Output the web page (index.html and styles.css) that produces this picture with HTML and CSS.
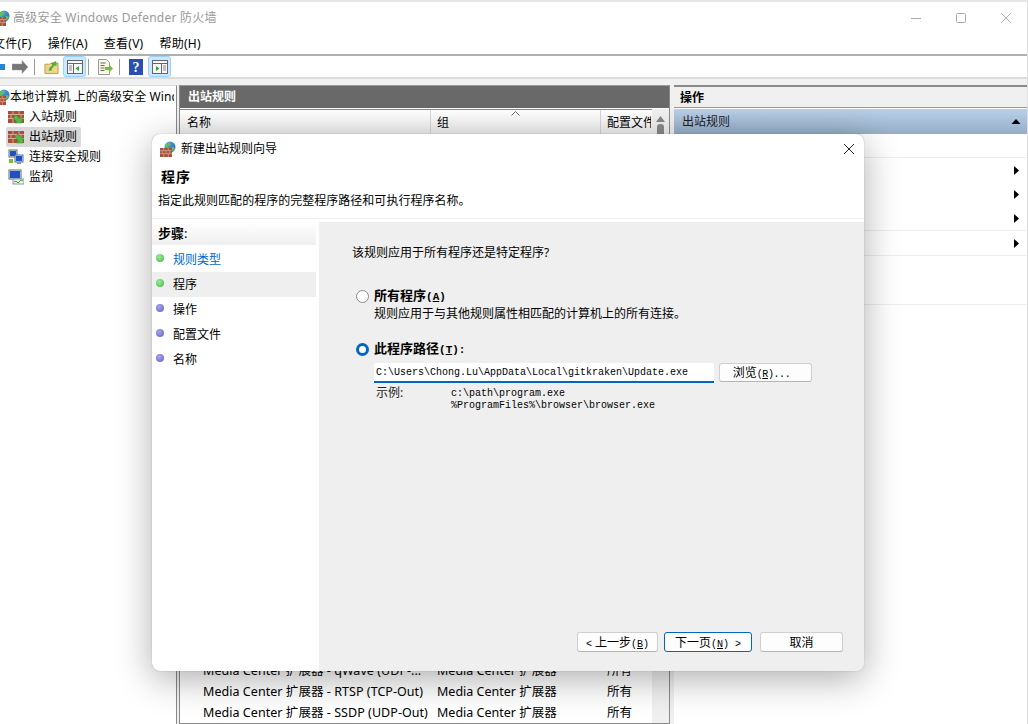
FILE: index.html
```html
<!DOCTYPE html>
<html lang="zh-CN">
<head>
<meta charset="utf-8">
<title>高级安全 Windows Defender 防火墙</title>
<link rel="stylesheet" href="styles.css">
</head>
<body>
<svg class="defs" width="0" height="0" aria-hidden="true">
  <defs>
    <linearGradient id="globe" x1="0" y1="0" x2="1" y2="1"><stop offset="0" stop-color="#5ab4f0"/><stop offset="1" stop-color="#1c5fb0"/></linearGradient>
    <symbol id="wall" viewBox="0 0 16 12">
      <rect width="16" height="12" fill="#a4503a"/>
      <path d="M0 3.500h16M0 7.500h16M5 0v3.500M11 0v3.500M3 3.500v4M8 3.500v4M13 3.500v4M5 7.500V12M11 7.500V12" stroke="#d8a890" stroke-width="1" fill="none"/>
    </symbol>
    <symbol id="fw" viewBox="0 0 16 16">
      <circle cx="10" cy="6" r="5.500" fill="url(#globe)"/>
      <path d="M8 1.500c2 0 3 1 2.500 2.500S8 5 7.500 6.500 6 6 5.500 5 6 2 8 1.500zM12 6c1.500 0 2.500.5 3 1-.5 2-2 3-3 3s-1.500-3 0-4z" fill="#5fbf5a"/>
      <use href="#wall" x="0" y="7" width="12" height="9"/>
    </symbol>
    <symbol id="screens" viewBox="0 0 16 16">
      <rect x="1" y="1" width="8" height="7" fill="#e8eef8" stroke="#5a6a80"/>
      <rect x="2" y="2" width="6" height="5" fill="#1e50c8"/>
      <rect x="7" y="6" width="8" height="7" fill="#e8eef8" stroke="#5a6a80"/>
      <rect x="8" y="7" width="6" height="5" fill="#1e50c8"/>
      <rect x="9" y="13" width="4" height="2" fill="#8a96a6"/>
      <path d="M1 10h4v4H1z" fill="#6fbf3c"/>
    </symbol>
  </defs>
</svg>

<div class="app">
  <div class="desktop-strip"></div>
  <header class="titlebar">
    <svg class="title-icon"><use href="#fw"/></svg>
    <span class="title-text">高级安全 Windows Defender 防火墙</span>
    <div class="caption">
      <svg class="cap" viewBox="0 0 10 10"><path d="M0 5.500h10" stroke="#aaa" fill="none"/></svg>
      <svg class="cap" viewBox="0 0 10 10"><rect x=".5" y=".5" width="9" height="9" rx="1" stroke="#aaa" fill="none"/></svg>
      <svg class="cap" viewBox="0 0 10 10"><path d="M0 0l10 10M10 0L0 10" stroke="#b4b4b4" fill="none"/></svg>
    </div>
  </header>

  <nav class="menubar">
    <span>文件(F)</span><span>操作(A)</span><span>查看(V)</span><span>帮助(H)</span>
  </nav>

  <div class="toolbar">
    <svg class="tb-back" viewBox="0 0 16 14"><path d="M0 7l6-6v3h10v6H6v3z" fill="#1e88d8"/></svg>
    <svg class="tb-fwd" viewBox="0 0 16 14"><path d="M16 7l-6-6.500V4H0v6h10v3.500z" fill="#777" stroke="#999" stroke-width=".5"/></svg>
    <i class="tb-sep s1"></i>
    <svg class="tb-ico folder" viewBox="0 0 16 16"><path d="M1 5h5l1-1h8v11H1z" fill="#f0d48a" stroke="#b99a4a"/><path d="M5 12c0-3 2-5 4-6L7.500 4 13 1.500 13.500 7 11.500 6.500C9.500 8 8 10 8 12z" fill="#4fae3c"/></svg>
    <span class="tb-toggle t1"><svg viewBox="0 0 16 14"><rect x=".5" y=".5" width="15" height="13" fill="#f7f7f7" stroke="#666"/><path d="M1 3.500h14M6.500 4v9" stroke="#666" fill="none"/><path d="M2 6h3M2 8h3M2 10h3" stroke="#888" fill="none"/><path d="M12 6v5L8.500 8.500z" fill="#2fa83a"/></svg></span>
    <i class="tb-sep s2"></i>
    <svg class="tb-ico doc" viewBox="0 0 16 16"><path d="M1.500.5h8l3 3v12h-11z" fill="#fbf7e8" stroke="#999"/><path d="M3.500 4h5M3.500 6.500h4M3.500 9h4M3.500 11.500h4" stroke="#666" fill="none"/><path d="M8 8h4V5.500L16 9.500 12 13.500V11H8z" fill="#6fbf3c"/></svg>
    <i class="tb-sep s3"></i>
    <svg class="tb-ico help" viewBox="0 0 14 16"><rect width="14" height="16" fill="#2a4fb0"/><text x="7" y="13" text-anchor="middle" class="help-q">?</text></svg>
    <span class="tb-toggle t2"><svg viewBox="0 0 16 14"><rect x=".5" y=".5" width="15" height="13" fill="#f7f7f7" stroke="#666"/><path d="M1 3.500h14M9.500 4v9" stroke="#666" fill="none"/><path d="M11 6h3M11 8h3M11 10h3" stroke="#888" fill="none"/><path d="M4 6v5L7.500 8.500z" fill="#2fa83a"/></svg></span>
  </div>

  <main class="panes">
    <aside class="tree">
      <div class="tree-row root"><svg class="root-ico"><use href="#fw"/></svg><span class="root-label">本地计算机 上的高级安全 Windows Defender 防火墙</span></div>
      <div class="tree-row"><svg class="tree-ico" viewBox="0 0 16 14"><use href="#wall" width="16" height="12" y="1"/><path d="M14 13V7l-2 2-4-4-3 3 4 4-2 1z" fill="#52b848" stroke="#3a8a34" stroke-width=".5"/></svg><span>入站规则</span></div>
      <div class="tree-row selected"><svg class="tree-ico" viewBox="0 0 16 14"><use href="#wall" width="16" height="12" y="1"/><path d="M15 13H8.500l2-2L7 7l3-3 3.500 4 1.500-2z" fill="#52b848" stroke="#3a8a34" stroke-width=".5"/></svg><span>出站规则</span></div>
      <div class="tree-row"><svg class="tree-ico"><use href="#screens"/></svg><span>连接安全规则</span></div>
      <div class="tree-row"><svg class="tree-ico" viewBox="0 0 16 16"><rect x="1" y="1" width="12" height="9" fill="#e8eef8" stroke="#5a6a80"/><rect x="2" y="2" width="10" height="7" fill="#1e50c8"/><rect x="5" y="10" width="11" height="5" fill="#eef3ee" stroke="#8a96a6"/><path d="M6 13l2-1 2 2 3-3 2 1" stroke="#3aa63a" fill="none"/></svg><span>监视</span></div>
    </aside>

    <section class="center">
      <h2 class="center-head">出站规则</h2>
      <div class="table-head">
        <span class="col-name">名称</span>
        <span class="col-group">组<svg class="sort" viewBox="0 0 9 5"><path d="M.5 4.500l4-4 4 4" stroke="#666" fill="none"/></svg></span>
        <span class="col-prof">配置文件</span>
      </div>
      <div class="table-wrap">
        <div class="rows">
          <div class="row"><span class="col-name">Media Center 扩展器 - qWave (UDP-...</span><span class="col-group">Media Center 扩展器</span><span class="col-prof">所有</span></div>
          <div class="row"><span class="col-name">Media Center 扩展器 - RTSP (TCP-Out)</span><span class="col-group">Media Center 扩展器</span><span class="col-prof">所有</span></div>
          <div class="row"><span class="col-name">Media Center 扩展器 - SSDP (UDP-Out)</span><span class="col-group">Media Center 扩展器</span><span class="col-prof">所有</span></div>
        </div>
        <div class="scrollbar">
          <svg class="sb-up" viewBox="0 0 9 6"><path d="M0 6l4.500-6L9 6z" fill="#888"/></svg>
          <i class="sb-thumb"></i>
        </div>
      </div>
    </section>

    <aside class="actions">
      <h2 class="actions-head">操作</h2>
      <div class="actions-bar"><span>出站规则</span><svg class="up" viewBox="0 0 9 5"><path d="M0 5l4.500-5L9 5z" fill="#000"/></svg></div>
      <ul class="action-list">
        <li class="a1"></li>
        <li class="a2 nosep"><svg class="more" viewBox="0 0 5 9"><path d="M0 0l5 4.500L0 9z"/></svg></li>
        <li class="a2 nosep"><svg class="more" viewBox="0 0 5 9"><path d="M0 0l5 4.500L0 9z"/></svg></li>
        <li class="a3"><svg class="more" viewBox="0 0 5 9"><path d="M0 0l5 4.500L0 9z"/></svg></li>
        <li class="a4"><svg class="more" viewBox="0 0 5 9"><path d="M0 0l5 4.500L0 9z"/></svg></li>
        <li class="a5"></li>
      </ul>
    </aside>
  </main>
</div>

<div class="dialog" role="dialog">
  <div class="dlg-title">
    <svg class="dlg-ico"><use href="#fw"/></svg>
    <span>新建出站规则向导</span>
    <svg class="dlg-close" viewBox="0 0 10 10"><path d="M0 0l10 10M10 0L0 10" stroke="#222" fill="none"/></svg>
  </div>
  <div class="dlg-head">
    <h1>程序</h1>
    <p>指定此规则匹配的程序的完整程序路径和可执行程序名称。</p>
  </div>
  <div class="dlg-body">
    <div class="steps">
      <div class="steps-head"><b>步骤</b>:</div>
      <div class="step"><i class="dot done"></i><a class="step-link">规则类型</a></div>
      <div class="step current"><i class="dot done"></i>程序</div>
      <div class="step"><i class="dot"></i>操作</div>
      <div class="step"><i class="dot"></i>配置文件</div>
      <div class="step"><i class="dot"></i>名称</div>
    </div>
    <div class="content">
      <p class="question">该规则应用于所有程序还是特定程序?</p>
      <div class="option first">
        <i class="radio"></i>
        <div>
          <div class="opt-label">所有程序<span class="mono">(<u>A</u>)</span></div>
          <div class="opt-sub">规则应用于与其他规则属性相匹配的计算机上的所有连接。</div>
        </div>
      </div>
      <div class="option second">
        <i class="radio on"></i>
        <div class="opt-label">此程序路径<span class="mono">(<u>T</u>):</span></div>
      </div>
      <div class="path-row">
        <div class="path-input">C:\Users\Chong.Lu\AppData\Local\gitkraken\Update.exe</div>
        <button class="btn browse">浏览<span class="mono">(<u>R</u>)...</span></button>
      </div>
      <div class="example">
        <span class="ex-label">示例:</span>
        <span class="ex-text">c:\path\program.exe<br>%ProgramFiles%\browser\browser.exe</span>
      </div>
      <div class="dlg-foot">
        <button class="btn back"><span class="mono">&lt;</span> 上一步<span class="mono">(<u>B</u>)</span></button>
        <button class="btn next">下一页<span class="mono">(<u>N</u>) &gt;</span></button>
        <button class="btn cancel">取消</button>
      </div>
    </div>
  </div>
</div>
</body>
</html>
```
FILE: styles.css
```css
* { box-sizing: border-box; }
html, body { margin: 0; height: 100%; }
body {
  width: 1028px; height: 724px; overflow: hidden; position: relative;
  background: #fff; color: #000;
  font: 12px/16px "Noto Sans", "Noto Sans CJK SC", sans-serif;
}
.defs { position: absolute; }
.app { height: 724px; display: flex; flex-direction: column; border-right: 1px solid #dedede; }
.desktop-strip { height: 2px; background: #e6e6e6; margin-right: -1px; flex: none; }

.titlebar { height: 32px; flex: none; display: flex; align-items: center; background: #fff; position: relative; border-top-right-radius: 8px; }
.title-icon { width: 16px; height: 16px; margin: 0 3px 0 -6px; flex: none; }
.title-text { color: #9a9a9a; letter-spacing: .25px; }
.caption { margin-left: auto; display: flex; gap: 35px; padding-right: 16px; }
.cap { width: 10px; height: 10px; }

.menubar { height: 22px; flex: none; display: flex; gap: 16px; margin-left: -7px; border-bottom: 2px solid #b0b0b0; line-height: 20px; letter-spacing: .25px; }

.toolbar { height: 23px; flex: none; display: flex; align-items: center; border-bottom: 2px solid #dcdcdc; background: #fff; }
.tb-back { width: 16px; height: 14px; margin-left: -11px; }
.tb-fwd { width: 16px; height: 14px; margin-left: 7px; }
.tb-sep { width: 1px; height: 16px; background: #999; flex: none; }
.tb-sep.s1 { margin-left: 6px; }
.tb-sep.s2 { margin-left: 2px; }
.tb-sep.s3 { margin-left: 6px; }
.tb-ico { width: 16px; height: 16px; flex: none; }
.tb-ico.folder { width: 15px; margin-left: 9px; }
.tb-ico.doc { margin-left: 8px; }
.tb-ico.help { width: 14px; margin-left: 9px; }
.help-q { fill: #fff; font: bold 14px "Liberation Serif", serif; }
.tb-toggle { width: 23px; height: 21px; flex: none; display: flex; align-items: center; justify-content: center; background: #cce8ff; border: 1px solid #99d1ff; border-radius: 3px; }
.tb-toggle.t1 { margin-left: 4px; }
.tb-toggle.t2 { margin-left: 5px; }
.tb-toggle svg { width: 16px; height: 14px; }

.panes { flex: 1; min-height: 0; display: flex; background: #f0f0f0; padding-top: 6px; }

.tree { width: 177px; flex: none; background: #fff; border-right: 1px solid #8a8a8a; border-top: 1px solid #dcdcdc; padding: 1px 2px 0 0; overflow: hidden; }
.tree-row { height: 20px; display: flex; align-items: center; gap: 5px; margin-left: 8px; }
.tree-row.root { margin: 0 0 0 -6px; gap: 0; white-space: nowrap; height: 20px; overflow: hidden; }
.root-ico { width: 16px; height: 16px; flex: none; }
.root-label { flex: none; letter-spacing: .1px; }
.tree-ico { width: 16px; height: 16px; flex: none; }
.tree-row.selected { background: #d9d9d9; width: 75px; margin-left: 6px; padding-left: 2px; border-radius: 2px; }

.center { width: 491px; margin-left: 2px; flex: none; display: flex; flex-direction: column; background: #fff; border: 1px solid #8a8a8a; border-top: 0; }
.center-head { margin: 0; height: 24px; flex: none; background: #696969; color: #fff; font-size: 12px; font-weight: bold; line-height: 22px; padding-left: 8px; border-top: 1px solid #999; border-bottom: 1px solid #fff; }
.table-head { height: 26px; flex: none; display: flex; align-items: center; background: linear-gradient(#fff, #eee); border-top: 1px solid #8a8a8a; border-bottom: 1px solid #ddd; position: relative; }
.table-head .col-name, .table-head .col-group, .table-head .col-prof { align-self: stretch; line-height: 26px; padding-left: 6px; border-right: 1px solid #d5d5d5; }
.table-head .col-name { padding-left: 7px; }
.table-head .col-prof { border: 0; overflow: hidden; white-space: nowrap; }
.col-name { width: 251px; flex: none; }
.col-group { width: 170px; flex: none; position: relative; }
.col-prof { width: 50px; flex: none; }
.sort { position: absolute; top: 1px; left: 80px; width: 9px; height: 5px; }
.table-wrap { flex: 1; min-height: 0; display: flex; }
.rows { flex: 1; display: flex; flex-direction: column; justify-content: flex-end; }
.row { height: 21px; display: flex; align-items: center; white-space: nowrap; flex: none; font-size: 12.5px; }
.row .col-name { padding-left: 23px; overflow: hidden; letter-spacing: .05px; }
.row .col-group { padding-left: 6px; }
.row .col-prof { padding-left: 6px; }
.scrollbar { width: 17px; flex: none; background: #f0f0f0; margin-top: -26px; display: flex; flex-direction: column; align-items: center; position: relative; padding-top: 7px; }
.sb-up { width: 9px; height: 6px; }
.sb-thumb { width: 7px; height: 100px; background: #8a8a8a; border-radius: 3px; margin-top: 2px; }

.actions { flex: 1; margin-left: 4px; display: flex; flex-direction: column; background: #fff; border-top: 2px solid #8a8a8a; }
.actions-head { margin: 0; height: 21px; flex: none; background: #f0f0f0; border-bottom: 1px solid #999; font-size: 12px; font-weight: bold; line-height: 21px; padding-left: 6px; }
.actions-bar { height: 26px; flex: none; display: flex; align-items: center; justify-content: space-between; padding: 0 6px 0 8px; background: linear-gradient(#b9d0e8, #95adc7); border-top: 1px solid #fff; color: #1a1a2a; }
.up { width: 10px; height: 5px; }
.action-list { list-style: none; margin: 0; padding: 0 1px 0 6px; }
.action-list li { display: flex; align-items: center; justify-content: flex-end; padding-right: 7px; border-bottom: 1px solid #ececec; }
.action-list li.nosep { border-bottom: 0; }
.a1 { height: 24px; }
.a2 { height: 24px; }
.a3 { height: 25px; }
.a4 { height: 25px; }
.a5 { height: 49px; }
.more { width: 5px; height: 9px; }

.dialog { position: absolute; left: 152px; top: 134px; width: 712px; height: 537px; display: flex; flex-direction: column; background: #fff; border-radius: 8px; box-shadow: 0 8px 36px rgba(0,0,0,.32), 0 0 1px rgba(0,0,0,.4); overflow: hidden; }
.dlg-title { height: 30px; flex: none; display: flex; align-items: center; padding-left: 8px; gap: 5px; }
.dlg-ico { width: 16px; height: 16px; flex: none; }
.dlg-close { width: 10px; height: 10px; margin-left: auto; margin-right: 10px; }
.dlg-head { height: 55px; flex: none; border-bottom: 1px solid #eee; padding-top: 4px; }
.dlg-head h1 { margin: 0 0 0 9px; font-size: 14px; line-height: 18px; letter-spacing: 1px; }
.dlg-head p { margin: 7px 0 0 6px; line-height: 16px; letter-spacing: .02px; }
.dlg-body { flex: 1; min-height: 0; display: flex; margin-top: 3px; }
.steps { width: 167px; flex: none; border-right: 2px solid #fff; }
.steps-head { height: 23px; line-height: 22px; padding-left: 6px; background: linear-gradient(#fff, #efefef); margin-right: 1px; font-size: 13px; }
.step { height: 25px; display: flex; align-items: center; gap: 9px; padding-left: 4px; margin-right: 1px; }
.steps-head + .step { margin-top: 2px; }
.step.current { background: #efefef; }
.step-link { color: #0066cc; }
.dot { width: 8px; height: 8px; border-radius: 50%; flex: none; margin-top: -4px; background: radial-gradient(circle at 40% 35%, #a6a6ea, #5f5fc4); }
.dot.done { background: radial-gradient(circle at 40% 35%, #9fe89f, #3eb83e); }

.content { flex: 1; min-width: 0; background: #efefef; display: flex; flex-direction: column; padding-left: 37px; }
.question { margin: 23px 0 0 -4px; height: 16px; }
.option { display: flex; gap: 5px; align-items: flex-start; }
.option.first { margin-top: 26px; }
.option.second { margin-top: 18px; }
.opt-label { font-weight: bold; height: 17px; font-size: 13px; line-height: 17px; }
.opt-sub { height: 16px; margin-top: 2px; }
.radio { width: 13px; height: 13px; flex: none; margin-top: 3px; border-radius: 50%; background: #fff; border: 1px solid #8a8a8a; }
.radio.on { border: 3px solid #0067c0; }
.mono { font-family: "Liberation Mono", "Noto Sans CJK SC", monospace; font-size: 10px; }
.opt-label .mono { font-size: 11px; }
.path-row { display: flex; gap: 5px; margin: 6px 0 0 18px; align-items: flex-start; }
.path-input { width: 340px; height: 20px; background: #fff; border-bottom: 2px solid #0067c0; border-radius: 2px 2px 0 0; font: 10px/19px "Liberation Mono", monospace; padding-left: 2px; }
.btn { font: 12px/16px "Noto Sans", "Noto Sans CJK SC", sans-serif; color: #000; background: #fdfdfd; border: 1px solid #cfcfcf; border-bottom-color: #b5b5b5; border-radius: 3px; height: 20px; padding: 2px 0 0; flex: none; }
.browse { width: 93px; height: 19px; line-height: 15px; padding: 1px 8px 0 0; }
.browse .mono { letter-spacing: -.4px; }
.example { display: flex; margin: 2px 0 0 20px; }
.ex-label { width: 75px; flex: none; color: #222; }
.ex-text { font: 10px/12px "Liberation Mono", monospace; margin-top: 3px; }
.dlg-foot { margin-top: auto; display: flex; justify-content: flex-end; padding: 0 21px 19px 0; }
.back { width: 81px; }
.next { width: 88px; margin-left: 6px; border: 1px solid #0067c0; }
.cancel { width: 83px; margin-left: 8px; }
```
